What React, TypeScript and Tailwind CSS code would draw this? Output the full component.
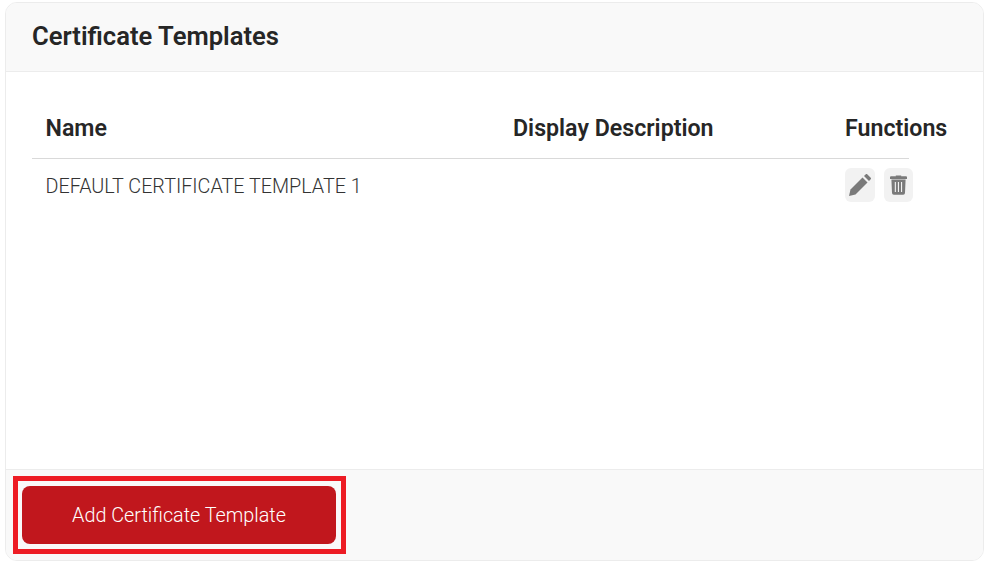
function PencilIcon() {
  return (
    <svg width="22" height="22" viewBox="0 0 22 22" fill="#7a7a7a">
      <path d="M0 22l1.5-6.5L13.5 3.5l5 5-12 12L0 22z" />
      <path d="M15 2l1.8-1.7a1 1 0 0 1 1.4 0l3.5 3.5a1 1 0 0 1 0 1.4L20 7l-5-5z" />
    </svg>
  );
}

function TrashIcon() {
  return (
    <svg width="17" height="20" viewBox="0 0 17 20" fill="#7a7a7a">
      <path d="M1 1.2h4.8V.4h5.4v.8H16a1 1 0 0 1 1 1V4H0V2.2a1 1 0 0 1 1-1z" />
      <path
        fillRule="evenodd"
        d="M1.4 4.6h14.2l-.6 13.4a1.8 1.8 0 0 1-1.8 1.7H3.8A1.8 1.8 0 0 1 2 18L1.4 4.6zM4.8 7v10h1.1V7H4.8zm3.1 0v10H9V7H7.9zm3.1 0v10h1.1V7H11z"
      />
    </svg>
  );
}

export default function App() {
  return (
    <div className="h-[564px] w-[989px] bg-white pt-[2px] pr-[5px] pb-[3px] pl-[5px] font-['Roboto',sans-serif]">
      <div className="flex h-full flex-col overflow-hidden rounded-xl border border-[#ececec] bg-white">
        <div className="flex h-[69px] items-center border-b border-[#ececec] bg-[#f9f9f9] pb-[2px] pl-[26px]">
          <h1 className="text-[25.6px] font-semibold text-[#262626]">Certificate Templates</h1>
        </div>

        <div className="flex-1 pt-[30px] pl-[26px]">
          <div className="flex h-[57px] w-[877px] items-center border-b border-[#d9d9d9] pb-[3px] pl-[13.5px] text-[23.2px] font-semibold whitespace-nowrap text-[#262626]">
            <div className="w-[467.5px] shrink-0">Name</div>
            <div className="w-[332px] shrink-0">Display Description</div>
            <div className="shrink-0">Functions</div>
          </div>
          <div className="flex h-[54px] w-[877px] items-center pl-[13.5px] whitespace-nowrap">
            <div className="w-[799.5px] shrink-0 pt-[1px] text-[19.75px] font-light text-[#333333]">DEFAULT CERTIFICATE TEMPLATE 1</div>
            <div className="flex shrink-0 -translate-y-[1px] gap-[9px]">
              <button className="flex h-[34px] w-[30px] items-center justify-center rounded-md bg-[#f2f2f2]">
                <PencilIcon />
              </button>
              <button className="flex h-[34px] w-[29px] items-center justify-center rounded-md bg-[#f2f2f2]">
                <TrashIcon />
              </button>
            </div>
          </div>
        </div>

        <div className="flex h-[91px] border-t border-[#ececec] bg-[#f9f9f9] pt-[6px] pl-[7px]">
          <div className="h-[78px] w-[333px] border-[5px] border-[#ed1c24] px-1 py-[5px]">
            <button className="h-[58px] w-[314px] rounded-lg bg-[#c1171d] pt-[1px] text-[19.8px] font-light text-white">
              Add Certificate Template
            </button>
          </div>
        </div>
      </div>
    </div>
  );
}
